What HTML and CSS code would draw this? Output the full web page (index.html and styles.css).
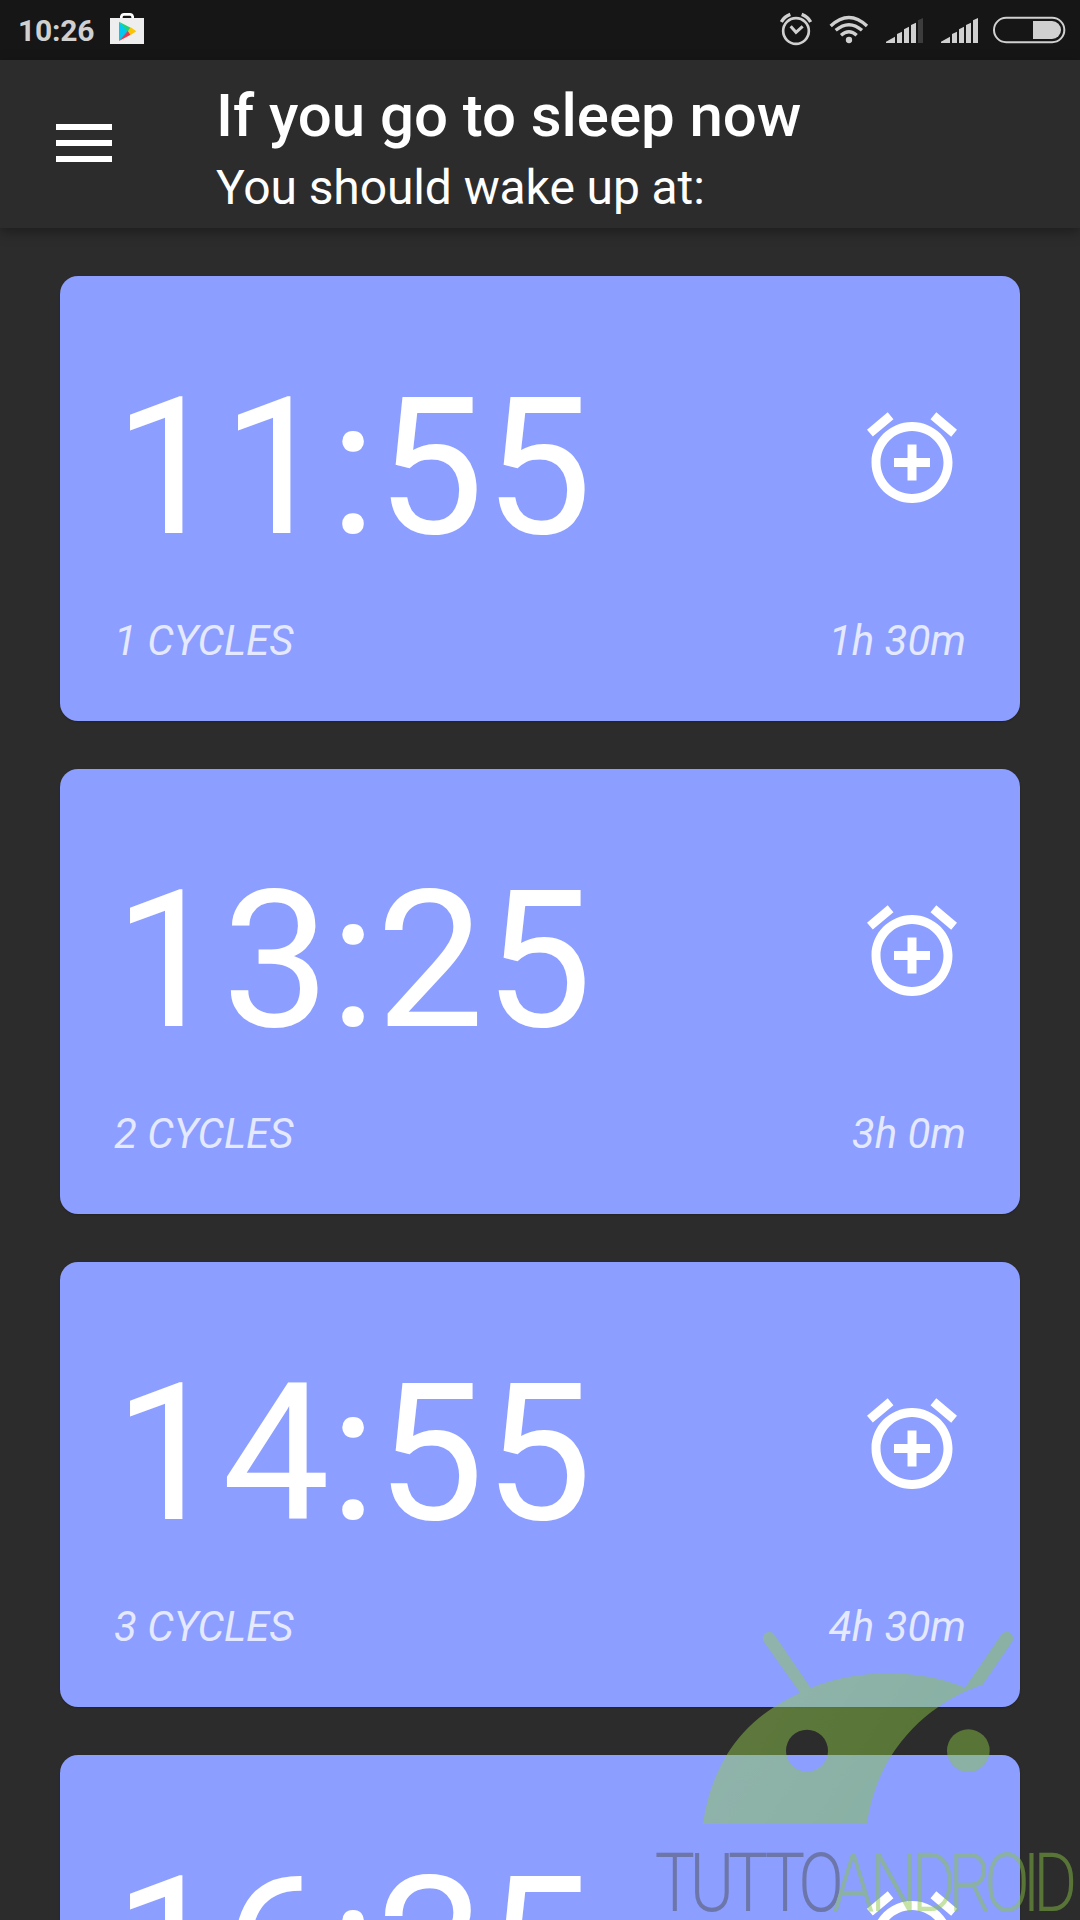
FILE: index.html
```html
<!DOCTYPE html>
<html lang="en">
<head>
  <meta charset="UTF-8">
  <title>Sleep cycles</title>
  <link rel="stylesheet" href="styles.css">
</head>
<body>

  <!-- shared icons -->
  <svg class="defs" width="0" height="0">
    <symbol id="alarm-add" viewBox="0 0 24 24">
      <path d="M7.88 3.39L6.6 1.86 2 5.71l1.29 1.53 4.59-3.85zM22 5.72l-4.6-3.86-1.29 1.53 4.6 3.86L22 5.72zM12 4c-4.97 0-9 4.03-9 9s4.02 9 9 9c4.97 0 9-4.03 9-9s-4.03-9-9-9zm0 16c-3.87 0-7-3.13-7-7s3.13-7 7-7 7 3.13 7 7-3.13 7-7 7zm1-11h-2v3H8v2h3v3h2v-3h3v-2h-3V9z"/>
    </symbol>
  </svg>

  <div class="status-bar">
    <span class="clock">10:26</span>
    <svg class="store" viewBox="327 0 108 180">
      <path d="M364 55V50Q366 43 372 43H390Q396 43 398 50V55" fill="none" stroke="#fff" stroke-width="8"/>
      <path d="M330 54H432V132H330Z" fill="#eee"/>
      <path d="M357 65V123L386 94Z" fill="#00c8f0"/>
      <path d="M357 65L392 83L384 96Z" fill="#1fd27a"/>
      <path d="M357 123L392 104L384 92Z" fill="#f0364b"/>
      <path d="M392 82L409 94L392 105L384 94Z" fill="#fbc400"/>
    </svg>
    <div class="status-icons">
      <svg class="st-alarm" viewBox="60 0 99 180">
        <g fill="none" stroke="#d0d0d0" stroke-width="8">
          <circle cx="108" cy="93" r="38.5"/>
          <path d="M92 79L108 97L128 79" stroke-width="9"/>
          <path d="M64 66Q72 50 91 43M152 66Q144 50 125 43" stroke-width="10"/>
        </g>
      </svg>
      <svg class="st-wifi" viewBox="207 0 120 180">
        <g fill="none" stroke="#d0d0d0" stroke-width="10">
          <path d="M212 78Q267 27 321 78"/>
          <path d="M227 91Q267 57 306 91"/>
          <path d="M243 106Q267 85 290 106"/>
        </g>
        <circle cx="267" cy="120" r="9.5" fill="#d0d0d0"/>
      </svg>
      <svg class="st-signal" viewBox="378 0 114 180">
        <path fill="#d0d0d0" d="M378 129V125L405 110V129ZM411 129V102L426 95V129ZM432 129V88L447 80V129ZM453 129V75L468 68V129Z"/>
        <path fill="#3c3c3c" d="M474 129V61L489 54V129Z"/>
      </svg>
      <svg class="st-signal" viewBox="378 0 114 180">
        <path fill="#d0d0d0" d="M378 129V125L405 110V129ZM411 129V102L426 95V129ZM432 129V88L447 80V129ZM453 129V75L468 68V129ZM474 129V61L489 54V129Z"/>
      </svg>
      <svg class="st-battery" viewBox="696 0 222 180">
        <rect x="702" y="53.500" width="211" height="73" rx="36.500" fill="none" stroke="#d0d0d0" stroke-width="6"/>
        <path fill="#d0d0d0" d="M819 63H876A27 27 0 0 1 876 117H819Z"/>
      </svg>
    </div>
  </div>

  <header class="header">
    <div class="menu">
      <span></span>
      <span></span>
      <span></span>
    </div>
    <div class="titles">
      <h1>If you go to sleep now</h1>
      <p>You should wake up at:</p>
    </div>
  </header>

  <main class="list">
    <div class="card">
      <div class="card-top">
        <span class="time">11:55</span>
        <svg class="add"><use href="#alarm-add"/></svg>
      </div>
      <div class="card-info"><span>1 CYCLES</span><span>1h 30m</span></div>
    </div>
    <div class="card">
      <div class="card-top">
        <span class="time">13:25</span>
        <svg class="add"><use href="#alarm-add"/></svg>
      </div>
      <div class="card-info"><span>2 CYCLES</span><span>3h 0m</span></div>
    </div>
    <div class="card">
      <div class="card-top">
        <span class="time">14:55</span>
        <svg class="add"><use href="#alarm-add"/></svg>
      </div>
      <div class="card-info"><span>3 CYCLES</span><span>4h 30m</span></div>
    </div>
    <div class="card">
      <div class="card-top">
        <span class="time">16:25</span>
        <svg class="add"><use href="#alarm-add"/></svg>
      </div>
    </div>
  </main>

  <svg class="watermark" viewBox="0 0 1320 960">
    <defs>
      <linearGradient id="head" x1="0" y1="0.300" x2="1" y2="0.700">
        <stop offset="0" stop-color="#98cc54"/>
        <stop offset="0.700" stop-color="#88c643"/>
      </linearGradient>
    </defs>
    <path fill="url(#head)" fill-rule="evenodd" d="M189 672C199 595 222 530 260 465C297 404 345 358 402 321Q440 297 480 278L372 126A19 19 0 0 1 403 104L512 263C590 234 665 220 745 220C825 220 905 234 975 263L1084 104A19 19 0 0 1 1116 126L1028 254C980 270 935 292 895 321C840 358 792 408 755 465C715 530 690 600 681 672ZM501 389A63 63 0 1 0 501 515A63 63 0 1 0 501 389Z"/>
    <circle cx="985" cy="452" r="64" fill="#88c643"/>
    <g class="brand" transform="scale(0.830 1)">
      <text y="933" x="53 180 318 452 572" fill="#4b4b4b">TUTTO</text>
      <text y="933" x="695 831 981 1114 1244 1383 1421" fill="#88c643">ANDROID</text>
    </g>
  </svg>

</body>
</html>
```

FILE: styles.css
```css
body {
  margin: 0;
  height: 1920px;
  overflow: hidden;
  position: relative;
  background-color: #2c2c2c;
  font-family: Roboto, sans-serif;
  color: #fff;
}
.defs {
  position: absolute;
}
.status-bar {
  height: 60px;
  display: flex;
  background-color: #161616;
}
.status-bar svg {
  height: 60px;
}
.clock {
  width: 91px;
  padding-left: 18px;
  font-size: 30px;
  font-weight: 700;
  line-height: 61px;
  letter-spacing: -0.2px;
  color: #d0d0d0;
}
.store {
  width: 36px;
}
.status-icons {
  display: flex;
  margin-left: auto;
  margin-right: 14px;
}
.st-alarm {
  width: 33px;
  margin-right: 16px;
}
.st-wifi {
  width: 40px;
  margin-right: 17px;
}
.st-signal {
  width: 38px;
  margin-right: 17px;
}
.st-signal + .st-signal {
  margin-right: 13px;
}
.st-battery {
  width: 74px;
}
.header {
  height: 168px;
  display: flex;
  box-shadow: 0 4px 12px rgba(0, 0, 0, 0.35);
}
.menu {
  width: 56px;
  padding: 64px 104px 0 56px;
  display: flex;
  flex-direction: column;
  gap: 10px;
}
.menu span {
  height: 6px;
  background-color: #fff;
}
.titles {
  padding-top: 21px;
}
.titles h1 {
  margin: 0;
  font-size: 60px;
  font-weight: 500;
  line-height: 70px;
  letter-spacing: -0.06px;
}
.titles p {
  margin: 9px 0 0;
  font-size: 48px;
  line-height: 56px;
  letter-spacing: -0.1px;
}
.list {
  padding: 48px 60px 0;
  display: flex;
  flex-direction: column;
  gap: 48px;
}
.card {
  height: 445px;
  padding: 79px 54px 0;
  box-sizing: border-box;
  flex-shrink: 0;
  background-color: #8c9eff;
  border-radius: 18px;
  box-shadow: 0 1px 2px rgba(0, 0, 0, 0.2);
}
.card-top {
  height: 225px;
  display: flex;
  justify-content: space-between;
}
.time {
  font-size: 192px;
  line-height: 225px;
}
.add {
  width: 108px;
  height: 108px;
  margin-top: 49px;
  fill: #fff;
}
.card-info {
  margin-top: 36px;
  display: flex;
  justify-content: space-between;
  font-size: 42px;
  font-style: italic;
  line-height: 49px;
  color: rgba(255, 255, 255, 0.78);
}
.watermark {
  position: absolute;
  right: 0;
  bottom: 0;
  width: 440px;
  height: 320px;
  opacity: 0.48;
}
.brand {
  font-size: 243px;
  font-weight: 300;
}
```
